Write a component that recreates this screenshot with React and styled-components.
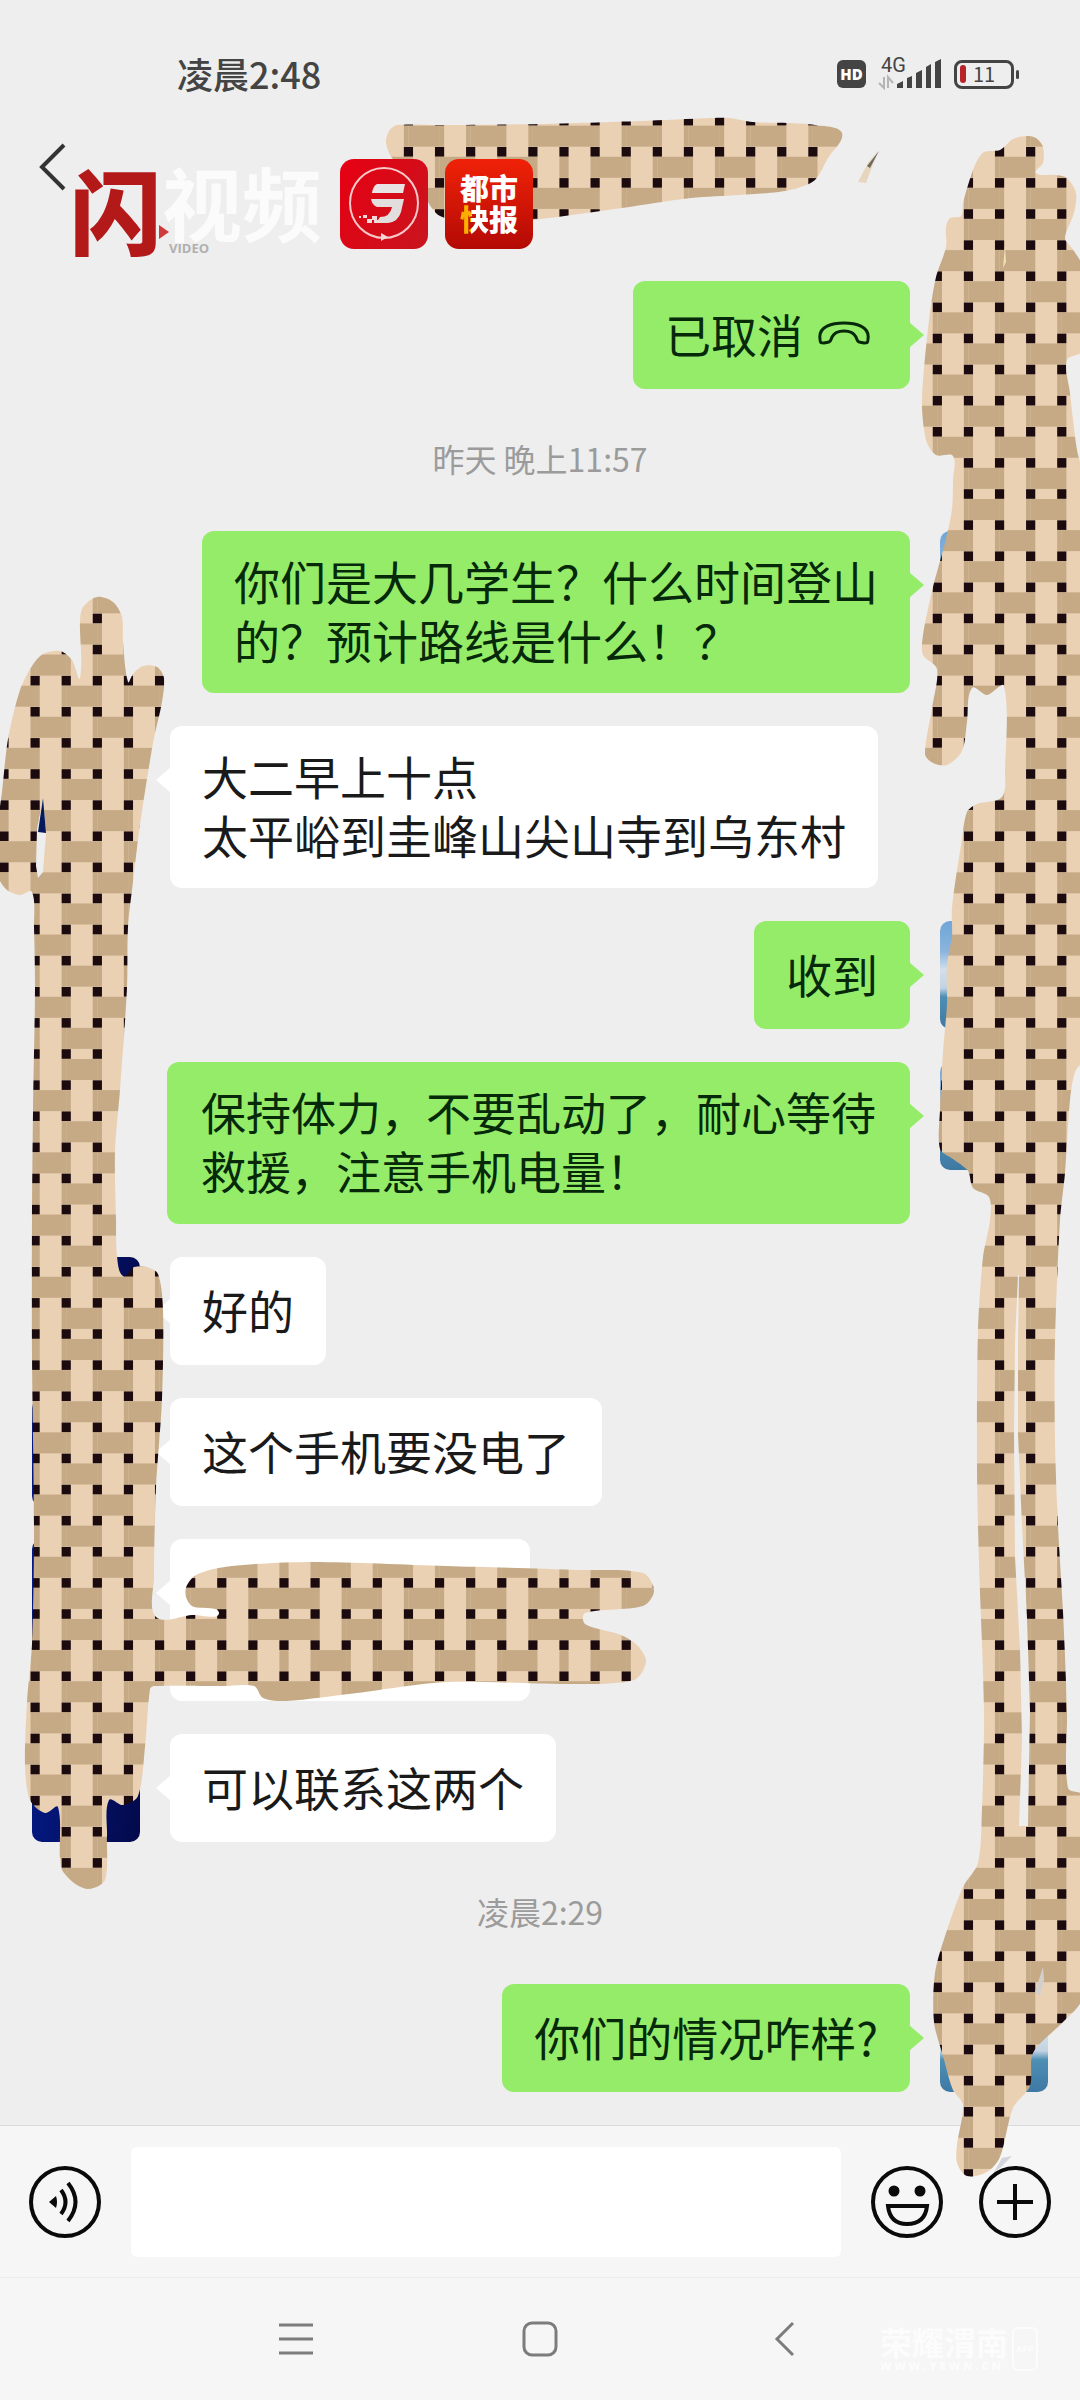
import React from 'react';
import styled, { createGlobalStyle } from 'styled-components';

const GlobalStyle = createGlobalStyle`
  * {
    box-sizing: border-box;
  }

  body {
    margin: 0;
    background-color: #ededed;
    font-family: 'Noto Sans CJK SC', 'Noto Sans', sans-serif;
  }
`;

const Page = styled.div`
  position: relative;
  display: flex;
  flex-direction: column;
  min-height: 100vh;
  background-color: #eeeeee;
  overflow: hidden;
`;

const StatusBar = styled.div`
  display: flex;
  align-items: center;
  justify-content: space-between;
  height: 120px;
  padding: 28px 66px 0 177px;
`;

const Clock = styled.span`
  padding-bottom: 2px;
  color: #444444;
  font-size: 36px;
  line-height: 48px;
  font-weight: 500;
`;

const StatusIcons = styled.div`
  display: flex;
  align-items: center;
  gap: 12px;
`;

const HdBadge = styled.span`
  width: 29px;
  height: 28px;
  border-radius: 6px;
  background-color: #444444;
  color: white;
  font-family: 'Open Sans', sans-serif;
  font-size: 15px;
  font-weight: 800;
  line-height: 28px;
  text-align: center;
`;

const Network = styled.div`
  position: relative;
  width: 64px;
  height: 32px;
`;

const NetworkLabel = styled.span`
  position: absolute;
  top: -4px;
  left: 3px;
  color: #444444;
  font-family: Roboto, sans-serif;
  font-size: 20px;
  line-height: 22px;
`;

const Battery = styled.div`
  position: relative;
  display: flex;
  align-items: center;
  gap: 7px;
  width: 60px;
  height: 29px;
  padding-left: 3px;
  border: 3px solid #444444;
  border-radius: 8px;
  color: #444444;
  font-family: 'Noto Sans CJK SC', sans-serif;
  font-size: 20px;
  line-height: 22px;

  &:before {
    content: '';
    width: 6px;
    height: 18px;
    border-radius: 3px;
    background-color: #b8232b;
  }

  &:after {
    content: '';
    position: absolute;
    right: -8px;
    top: 7px;
    width: 3px;
    height: 9px;
    border-radius: 2px;
    background-color: #444444;
  }
`;

const Header = styled.header`
  position: relative;
  display: flex;
  align-items: center;
  height: 94px;
  padding-left: 38px;
`;

const IconButton = styled.button`
  display: flex;
  padding: 0;
  border: none;
  background: none;
  cursor: pointer;
`;

const Brands = styled.div`
  position: absolute;
  z-index: 2;
  top: 39px;
  left: 70px;
  display: flex;
`;

const FlashMark = styled.div`
  width: 92px;
  color: #b31919;
  font-size: 92px;
  font-weight: 900;
  line-height: 98px;
`;

const VideoMark = styled.div`
  display: flex;
  flex-direction: column;
  width: 178px;
`;

const VideoTitle = styled.span`
  color: #fbfbfb;
  font-size: 80px;
  font-weight: 700;
  line-height: 82px;
  white-space: nowrap;
`;

const VideoSub = styled.span`
  padding-left: 7px;
  color: #b0b0b0;
  font-family: 'Open Sans', sans-serif;
  font-size: 13px;
  font-weight: 700;
  line-height: 14px;
`;

const AppTile = styled.div`
  width: 88px;
  height: 90px;
  margin-right: 17px;
  border-radius: 14px;
  background: ${(props) => props.$bg};
  overflow: hidden;
`;

const PaperName = styled.div`
  padding-top: 13px;
  color: white;
  font-size: 29px;
  font-weight: 900;
  line-height: 31px;
  text-align: center;
`;

const Fast = styled.span`
  background: linear-gradient(90deg, #f9b000 38%, white 38%);
  background-clip: text;
  color: transparent;
`;

const Chat = styled.main`
  flex: 1;
  display: flex;
  flex-direction: column;
  gap: 33px;
  padding: 67px 32px 33px;
`;

const Time = styled.time`
  padding-bottom: 3px;
  color: #9b9b9b;
  font-size: 32px;
  line-height: 73px;
  text-align: center;
`;

const Row = styled.div`
  display: flex;
  flex-direction: ${(props) => (props.$mine ? 'row-reverse' : 'row')};
  align-items: flex-start;
  gap: 30px;
`;

const Avatar = styled.div`
  flex: none;
  width: 108px;
  height: 108px;
  border-radius: 10px;
  background: ${(props) =>
    props.$mine
      ? 'linear-gradient(#6fa6d8 0%, #8ab4dc 28%, #d3dfea 45%, #c3d3e2 62%, #4f8fb4 70%, #3d78a4 100%)'
      : 'linear-gradient(100deg, #041a86, #03094a)'};
`;

const Bubble = styled.div`
  position: relative;
  display: flex;
  align-items: center;
  gap: 15px;
  min-width: ${(props) => (props.$blank ? '360px' : '0')};
  min-height: ${(props) => (props.$blank ? '162px' : '108px')};
  padding: 20px ${(props) => (props.$long ? '34px' : '32px')} 24px;
  border-radius: 12px;
  background-color: ${(props) => (props.$mine ? '#95ec69' : 'white')};
  color: ${(props) => (props.$mine ? '#06290a' : '#1a1a1a')};
  font-size: ${(props) => (props.$long ? '45px' : '46px')};
  line-height: 59px;
  white-space: pre;

  &:after {
    content: '';
    position: absolute;
    top: 41px;
    ${(props) => (props.$mine ? 'right' : 'left')}: -14px;
    width: 15px;
    height: 26px;
    background-color: inherit;
    clip-path: ${(props) =>
      props.$mine
        ? 'polygon(0 0, 100% 50%, 0 100%)'
        : 'polygon(100% 0, 0 50%, 100% 100%)'};
  }
`;

const Composer = styled.form`
  display: flex;
  align-items: center;
  height: 152px;
  padding: 0 29px;
  border-top: 1px solid #dadada;
  background-color: #f6f6f6;

  ${IconButton} {
    position: relative;
    z-index: 2;
  }
`;

const TextInput = styled.input`
  flex: 1;
  min-width: 0;
  height: 110px;
  margin: 0 30px;
  padding: 0 24px;
  border: none;
  border-radius: 6px;
  outline: none;
  background-color: white;
  font-size: 46px;
`;

const Actions = styled.div`
  display: flex;
  gap: 36px;
`;

const NavBar = styled.nav`
  position: relative;
  display: flex;
  align-items: center;
  justify-content: center;
  gap: 208px;
  height: 123px;
  border-top: 1px solid #ececec;
  background-color: #f6f6f6;
`;

const SiteMark = styled.div`
  position: absolute;
  right: 42px;
  bottom: 26px;
  display: flex;
  align-items: center;
  gap: 4px;
  color: #fcfcfc;
`;

const SiteName = styled.div`
  font-size: 32px;
  font-weight: 700;
  line-height: 34px;
`;

const SiteUrl = styled.div`
  font-family: 'Open Sans', sans-serif;
  font-size: 11px;
  font-weight: 800;
  line-height: 16px;
  letter-spacing: 3px;
`;

const SiteApp = styled.div`
  width: 26px;
  height: 44px;
  border: 2px solid #fcfcfc;
  border-radius: 6px;
  font-family: 'Open Sans', sans-serif;
  font-size: 9px;
  font-weight: 700;
  line-height: 40px;
  text-align: center;
`;

const Cover = styled.svg`
  position: absolute;
  z-index: 1;
  top: 0;
  left: 0;
  width: 100%;
  height: auto;
  pointer-events: none;
`;

const PlayMark = styled.svg`
  position: absolute;
  top: 66px;
  left: 88px;
`;

// closed curve through a list of "x,y" points
const curve = (text) => {
  const pts = text
    .trim()
    .split(/\s+/)
    .map((p) => p.split(',').map(Number));
  const n = pts.length;
  let d = `M${pts[0]}`;
  for (let i = 0; i < n; i++) {
    const p0 = pts[(i + n - 1) % n];
    const p1 = pts[i];
    const p2 = pts[(i + 1) % n];
    const p3 = pts[(i + 2) % n];
    const len = Math.hypot(p2[0] - p1[0], p2[1] - p1[1]);
    const handle = (a, b) => {
      const l = Math.hypot(b[0] - a[0], b[1] - a[1]) || 1;
      return [((b[0] - a[0]) / l) * len * 0.28, ((b[1] - a[1]) / l) * len * 0.28];
    };
    const h1 = handle(p0, p2);
    const h2 = handle(p1, p3);
    d += `C${p1[0] + h1[0]},${p1[1] + h1[1]} ${p2[0] - h2[0]},${p2[1] - h2[1]} ${p2}`;
  }
  return d + 'Z';
};

const topStroke = curve(`
  386,143 389,131 397,125 440,125 540,124 640,121 712,118 729,118 753,122 790,123
  815,125 842,133 828,158 815,180 798,188 778,192 740,195 691,198 622,208 540,219
  480,222 440,216 424,195 410,165 393,159`);

const leftStroke = curve(`
  97,597 83,607 80,621 80,678 72,660 60,651 43,654 32,666 20,690 8,739 2,792 -2,825
  -1,878 7,890 20,895 32,892 34,927 35,988 33,1111 32,1220 32,1354 34,1532 32,1644
  27,1702 25,1765 30,1800 45,1813 58,1807 61,1867 74,1883 89,1889 105,1880 107,1836
  109,1800 123,1805 138,1796 145,1747 150,1689 154,1686 223,1686 254,1686 263,1698
  286,1701 357,1693 446,1682 571,1684 634,1680 646,1662 638,1646 621,1635 585,1624
  585,1613 643,1606 654,1591 643,1573 580,1570 446,1566 313,1562 232,1566 196,1575
  185,1591 192,1606 219,1613 192,1615 156,1617 154,1577 156,1488 162,1399 163,1309
  158,1274 147,1267 134,1267 123,1276 117,1256 116,1220 115,1151 120,1090 127,988
  128,927 133,882 140,825 153,743 162,702 164,678 157,667 143,666 133,674 128,682
  123,641 122,617 113,602`);

const rightStroke = curve(`
  1027,136 1013,139 1000,150 984,152 976,163 969,182 963,203 961,216 950,218 946,227
  946,247 936,277 929,320 922,400 926,440 936,455 953,456 953,480 952,509 945,543
  933,587 923,635 923,655 937,669 932,708 925,754 933,763 947,765 962,751 967,722
  972,688 987,695 1004,686 1005,771 1002,797 977,804 967,812 962,839 952,907 952,936
  947,965 947,1004 943,1052 940,1110 940,1149 953,1159 968,1171 973,1188 989,1197
  990,1220 983,1257 978,1330 977,1465 979,1563 984,1710 982,1808 978,1863 963,1887
  947,1930 935,1973 934,2022 943,2056 953,2090 963,2105 957,2145 957,2163 967,2176
  987,2172 1000,2157 1013,2108 1030,2086 1033,2053 1063,2022 1082,1998 1084,1796
  1068,1788 1067,1710 1063,1612 1058,1526 1055,1440 1055,1342 1060,1220 1065,1173
  1070,1100 1075,1072 1084,1058 1086,800 1084,480 1077,450 1070,393 1067,360 1084,350
  1084,270 1072,248 1065,238 1074,213 1076,193 1067,178 1056,175 1036,173 1043,163
  1043,147 1036,138`);

const leftSlit = 'M43 798L46 833L43 872L38 878L36 866L37 829Z';

const rightSlit =
  'M1018 1275L1015 1342L1014 1434L1015 1557L1020 1649L1022 1740L1019 1826H1028L1030 1710L1027 1618L1022 1526L1018 1434V1342L1019 1275Z';

const TILE = 280;
const CELL = TILE / 9;
const cells = Array.from({ length: 81 }, (_, k) => [k % 9, Math.floor(k / 9)]);
const knots = Array.from({ length: 100 }, (_, k) => [k % 10, Math.floor(k / 10)]);

// basket weave: tan bars run across, pale strips run down
const Weave = () => (
  <Cover viewBox="0 0 1080 2400" aria-hidden="true">
    <defs>
      <pattern
        id="weave"
        width={TILE}
        height={TILE}
        patternUnits="userSpaceOnUse"
        patternTransform="translate(4 -66)"
      >
        <rect width={TILE} height={TILE} fill="#ebd1b4" />
        {cells.map(([i, j]) => (
          <g key={`${i}-${j}`} fill="#c5aa85">
            {(i + j) % 2 === 0 ? (
              <rect x={i * CELL} y={j * CELL + 5} width={CELL + 0.3} height="21" />
            ) : (
              <>
                <rect x={i * CELL} y={j * CELL + 5} width="4.6" height="21" />
                <rect x={(i + 1) * CELL - 4.6} y={j * CELL + 5} width="4.6" height="21" />
              </>
            )}
          </g>
        ))}
        {knots.map(([i, j]) => (
          <rect
            key={`${i}-${j}`}
            x={i * CELL - 4.6}
            y={j * CELL - 4.8}
            width="9.2"
            height="9.6"
            fill="#1c0b0e"
          />
        ))}
      </pattern>
    </defs>
    <path d={topStroke} fill="url(#weave)" />
    <path d="M878 151L866 183L858 182L868 163Z" fill="#e6d6bd" />
    <path d="M879 151L870 168L867 166Z" fill="#6f6a60" />
    <path d={leftStroke} fill="url(#weave)" />
    <path d={leftSlit} fill="#eeeeee" />
    <path d="M43 798L46 833L38 832Z" fill="#06195c" />
    <path d="M1012 2156L1000 2168L994 2172L1002 2158Z" fill="#d3d4dc" />
    <path d={rightStroke} fill="url(#weave)" />
    <path d={rightSlit} fill="#eeeeee" />
    <path d="M1005 246L1003 268L1006 262Z" fill="#efe3b5" />
    <path d="M1043 1967L1035 1992L1040 1996L1044 1980Z" fill="#d3d0cc" />
  </Cover>
);

const Signal = () => (
  <svg width="64" height="32" viewBox="0 0 64 32">
    <g fill="#444444">
      <path d="M19 30V26L25 23V30Z" />
      <path d="M29 30V20L34 18V30Z" />
      <path d="M38 30V15L44 12V30Z" />
      <path d="M48 30V9L53 6V30Z" />
      <path d="M57 30V4L63 1V30Z" />
    </g>
    <g fill="none" stroke="#b5b5b5" strokeWidth="2">
      <path d="M6 19V30L1 25" />
      <path d="M10 30V19L15 25" />
    </g>
  </svg>
);

const HangUp = () => (
  <svg width="60" height="26" viewBox="0 0 60 26" fill="none">
    <path
      d="M2 19C0 6 15 3 26 3C37 3 52 6 50 19C50 23 49 23 46 23L41 22C39 21 39 20 38 17C36 13 32 11 26 11C20 11 16 13 14 17C13 20 13 21 11 22L6 23C3 23 2 23 2 19Z"
      stroke="#06290a"
      strokeWidth="3"
      strokeLinejoin="round"
    />
  </svg>
);

const FlashLogo = () => (
  <svg width="88" height="90" viewBox="0 0 88 90" fill="none">
    <ellipse cx="44" cy="44" rx="34" ry="35" stroke="#f8c9c9" strokeWidth="2" />
    <path d="M37 25H65L63 34H32Q33 27 37 25Z" fill="#e9e4e4" />
    <path
      d="M31 40H64L61 53Q58 63 48 64H36L40 58Q50 58 52 48H37Q32 46 31 40Z"
      fill="#e3dede"
    />
    <g fill="#f3dada">
      <path d="M32 57H37V61H32ZM27 60H32V64H27ZM23 56H27V59H23ZM34 61H39V64H34ZM19 57H21V59H19Z" />
      <path d="M41 74L48 78L41 82Z" />
    </g>
  </svg>
);

const Voice = () => (
  <svg width="72" height="72" viewBox="0 0 72 72" fill="none" stroke="#0a0a0a">
    <circle cx="36" cy="36" r="34" strokeWidth="4" />
    <path d="M20 36L27 30Q29 36 27 42Z" fill="#0a0a0a" stroke="none" />
    <path d="M32 24Q41 36 32 48" strokeWidth="4" />
    <path d="M39 17Q54 36 39 55" strokeWidth="4" />
  </svg>
);

const Smile = () => (
  <svg width="72" height="72" viewBox="0 0 72 72" fill="none" stroke="#0a0a0a">
    <circle cx="36" cy="36" r="34" strokeWidth="4" />
    <circle cx="23" cy="25" r="5.5" fill="#0a0a0a" stroke="none" />
    <circle cx="49" cy="25" r="5.5" fill="#0a0a0a" stroke="none" />
    <path d="M17 40H56Q54 58 36 58Q19 58 17 40Z" strokeWidth="4" />
  </svg>
);

const Plus = () => (
  <svg width="72" height="72" viewBox="0 0 72 72" fill="none" stroke="#0a0a0a">
    <circle cx="36" cy="36" r="34" strokeWidth="4" />
    <path d="M36 18V54M18 36H54" strokeWidth="4" />
  </svg>
);

const messages = [
  { mine: true, text: '已取消', call: true },
  { time: '昨天 晚上11:57' },
  { mine: true, text: '你们是大几学生？什么时间登山\n的？预计路线是什么！？' },
  { text: '大二早上十点\n太平峪到圭峰山尖山寺到乌东村' },
  { mine: true, text: '收到' },
  {
    mine: true,
    long: true,
    text: '保持体力，不要乱动了，耐心等待\n救援，注意手机电量！',
  },
  { text: '好的' },
  { text: '这个手机要没电了' },
  { text: '', blank: true },
  { text: '可以联系这两个' },
  { time: '凌晨2:29' },
  { mine: true, text: '你们的情况咋样?' },
];

const Message = ({ item }) => {
  if (item.time) {
    return <Time>{item.time}</Time>;
  }
  return (
    <Row $mine={item.mine}>
      <Avatar $mine={item.mine} />
      <Bubble $mine={item.mine} $long={item.long} $blank={item.blank}>
        {item.text}
        {item.call && <HangUp />}
      </Bubble>
    </Row>
  );
};

const App = () => {
  return (
    <Page>
      <GlobalStyle />
      <StatusBar>
        <Clock>凌晨2:48</Clock>
        <StatusIcons>
          <HdBadge>HD</HdBadge>
          <Network>
            <NetworkLabel>4G</NetworkLabel>
            <Signal />
          </Network>
          <Battery>11</Battery>
        </StatusIcons>
      </StatusBar>
      <Header>
        <IconButton aria-label="返回">
          <svg width="28" height="48" viewBox="0 0 28 48" fill="none">
            <path d="M26 2L4 24L26 46" stroke="#333333" strokeWidth="4" />
          </svg>
        </IconButton>
        <Brands>
          <FlashMark>闪</FlashMark>
          <PlayMark width="12" height="14" viewBox="0 0 12 14">
            <path d="M1 0L11 7L1 14Z" fill="#cf3a3a" />
          </PlayMark>
          <VideoMark>
            <VideoTitle>视频</VideoTitle>
            <VideoSub>VIDEO</VideoSub>
          </VideoMark>
          <AppTile $bg="linear-gradient(120deg, #e60012, #c8151f)">
            <FlashLogo />
          </AppTile>
          <AppTile $bg="linear-gradient(#f02208, #b30a05)">
            <PaperName>
              都市
              <br />
              <Fast>快</Fast>报
            </PaperName>
          </AppTile>
        </Brands>
      </Header>
      <Chat>
        {messages.map((item, index) => (
          <Message key={index} item={item} />
        ))}
      </Chat>
      <Composer onSubmit={(e) => e.preventDefault()}>
        <IconButton type="button" aria-label="语音">
          <Voice />
        </IconButton>
        <TextInput type="text" aria-label="消息" />
        <Actions>
          <IconButton type="button" aria-label="表情">
            <Smile />
          </IconButton>
          <IconButton type="button" aria-label="更多">
            <Plus />
          </IconButton>
        </Actions>
      </Composer>
      <NavBar>
        <IconButton aria-label="菜单">
          <svg width="36" height="36" viewBox="0 0 36 36" fill="none">
            <path d="M1 4H35M1 18H35M1 32H35" stroke="#7c7c7c" strokeWidth="3" />
          </svg>
        </IconButton>
        <IconButton aria-label="主页">
          <svg width="36" height="36" viewBox="0 0 36 36" fill="none">
            <rect x="2" y="2" width="32" height="32" rx="8" stroke="#7c7c7c" strokeWidth="3" />
          </svg>
        </IconButton>
        <IconButton aria-label="后退">
          <svg width="36" height="36" viewBox="0 0 36 36" fill="none">
            <path d="M27 2L11 18L27 34" stroke="#7c7c7c" strokeWidth="3" />
          </svg>
        </IconButton>
        <SiteMark>
          <div>
            <SiteName>荣耀渭南</SiteName>
            <SiteUrl>WWW.YEWN.CN</SiteUrl>
          </div>
          <SiteApp>APP</SiteApp>
        </SiteMark>
      </NavBar>
      <Weave />
    </Page>
  );
};

export default App;
